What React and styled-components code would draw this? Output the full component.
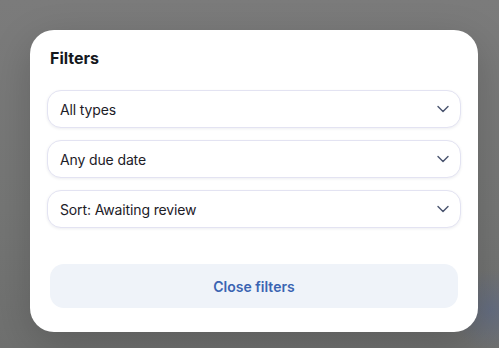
import React from "react";
import styled, { createGlobalStyle } from "styled-components";
import { ChevronDown } from "lucide-react";

const Global = createGlobalStyle`
  html, body { margin: 0; padding: 0; }
  body {
    font-family: Inter, "Noto Sans", "Liberation Sans", sans-serif;
    background: #777877;
  }
`;

const Backdrop = styled.div`
  width: 499px;
  height: 348px;
  box-sizing: border-box;
  padding: 30px 21px 16px 30px;
  background:
    radial-gradient(circle at 490px 310px, rgba(90, 105, 140, 0.55) 0, rgba(90, 105, 140, 0) 40px),
    linear-gradient(180deg, #7b7b7b 0%, #757675 60%, #6f706f 100%);
  overflow: hidden;
`;

const Card = styled.div`
  width: 448px;
  box-sizing: border-box;
  background: #ffffff;
  border-radius: 24px;
  padding: 18px 20px 24px 20px;
  display: flex;
  flex-direction: column;
  box-shadow: 0 12px 40px rgba(0, 0, 0, 0.18);
`;

const Title = styled.h2`
  margin: 0;
  font-size: 16px;
  line-height: 20px;
  font-weight: 700;
  color: #15181d;
`;

const Selects = styled.div`
  display: flex;
  flex-direction: column;
  gap: 12px;
  margin: 22px -3px 0 -3px;
`;

const Select = styled.div`
  height: 38px;
  box-sizing: border-box;
  border: 1px solid #e3e3f2;
  border-radius: 14px;
  background: #fff;
  box-shadow: 0 1px 3px rgba(30, 40, 80, 0.08);
  display: flex;
  align-items: center;
  justify-content: space-between;
  padding: 0 7px 0 12px;
  font-size: 14px;
  letter-spacing: -0.13px;
  color: #1d2027;
  svg { color: #4b5670; }
`;

const CloseButton = styled.button`
  margin-top: 36px;
  height: 44px;
  border: none;
  border-radius: 14px;
  background: #eff3f9;
  color: #3a64b2;
  font-family: inherit;
  font-size: 14px;
  font-weight: 600;
  cursor: pointer;
`;

const options = ["All types", "Any due date", "Sort: Awaiting review"];

export default function App() {
  return (
    <>
      <Global />
      <Backdrop>
        <Card>
          <Title>Filters</Title>
          <Selects>
            {options.map((o) => (
              <Select key={o}>
                <span>{o}</span>
                <ChevronDown size={20} strokeWidth={1.7} />
              </Select>
            ))}
          </Selects>
          <CloseButton>Close filters</CloseButton>
        </Card>
      </Backdrop>
    </>
  );
}
